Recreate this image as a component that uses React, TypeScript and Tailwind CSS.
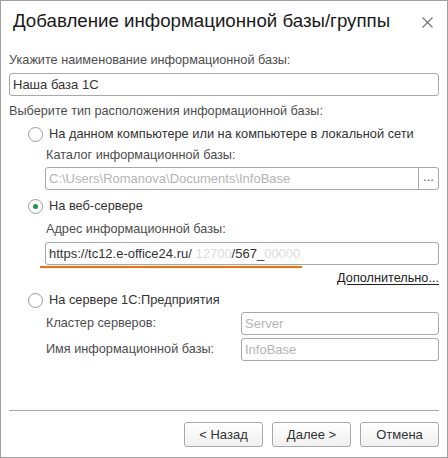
const font = "font-['Liberation_Sans',Arial,sans-serif]";

function Radio({ checked = false, label }: { checked?: boolean; label: string }) {
  return (
    <div className="flex h-[18px] items-center pl-[19px]">
      <span className="grid h-[15px] w-[15px] place-items-center rounded-full border border-[#9a9a9a] bg-white">
        {checked && <span className="h-[5px] w-[5px] rounded-full bg-[#1c9a4a]" />}
      </span>
      <span className="ml-[6px] text-[12.8px] text-[#333]">{label}</span>
    </div>
  );
}

function Field({ value, muted = false, className = '' }: { value: React.ReactNode; muted?: boolean; className?: string }) {
  return (
    <div
      className={`flex h-[23px] items-center rounded-[3px] border border-[#a8a8a8] bg-white px-[3px] text-[13px] ${
        muted ? 'text-[#b4b4b4]' : 'text-[#333]'
      } ${className}`}
    >
      {value}
    </div>
  );
}

function Button({ children }: { children: React.ReactNode }) {
  return (
    <button
      type="button"
      className="h-[25px] w-[79px] rounded-[3px] border border-[#a8a8a8] bg-gradient-to-b from-white to-[#f0f0f0] text-[13px] text-[#333]"
    >
      {children}
    </button>
  );
}

const label = 'text-[12.7px] leading-[15px] text-[#4d4d4d]';

export default function App() {
  return (
    <div className={`${font} flex h-[458px] w-[448px] flex-col border border-[#a0a0a0] bg-white`}>
      {/* header */}
      <div className="flex h-[41px] items-center justify-between pl-[12px] pr-[14px]">
        <h1 className="whitespace-nowrap text-[18.7px] leading-none text-[#1a1a1a]">Добавление информационной базы/группы</h1>
        <svg width="11" height="11" viewBox="0 0 11 11" className="mt-[1px] shrink-0">
          <path d="M0.5 0.5L10.5 10.5M10.5 0.5L0.5 10.5" stroke="#707070" strokeWidth="1.1" />
        </svg>
      </div>

      <div className="flex flex-col px-[8px]">
        <div className={`mt-[11px] ${label}`}>Укажите наименование информационной базы:</div>
        <Field value="Наша база 1С" className="mt-[5px]" />

        <div className={`mt-[8px] ${label}`}>Выберите тип расположения информационной базы:</div>

        <div className="mt-[6px]">
          <Radio label="На данном компьютере или на компьютере в локальной сети" />
        </div>
        <div className={`ml-[37px] mt-[5px] ${label}`}>Каталог информационной базы:</div>
        <div className="ml-[36px] mt-[4px] flex h-[23px] rounded-[3px] border border-[#a8a8a8] bg-white text-[13px]">
          <div className="flex flex-1 items-center px-[3px] text-[#b4b4b4]">C:\Users\Romanova\Documents\InfoBase</div>
          <div className="flex w-[20px] items-center justify-center border-l border-[#a8a8a8] pb-[4px] text-[#555]">...</div>
        </div>

        <div className="mt-[7px]">
          <Radio checked label="На веб-сервере" />
        </div>
        <div className={`ml-[37px] mt-[7px] ${label}`}>Адрес информационной базы:</div>
        <div className="ml-[36px] mt-[5px]">
          <Field
            value={
              <span>
                https://tc12.e-office24.ru/<span className="text-[#dcdcdc]"> 12700</span>/567_<span className="text-[#dcdcdc]">00000</span>
              </span>
            }
            className="h-[22px]"
          />
        </div>
        <div className="ml-[31px] mt-[1px] h-[2px] w-[262px] bg-[#ff6d00]" />
        <div className="mt-[3px] flex justify-end">
          <span className="text-[12.7px] leading-[15px] text-[#222] underline underline-offset-2">Дополнительно...</span>
        </div>

        <div className="mt-[5px]">
          <Radio label="На сервере 1С:Предприятия" />
        </div>
        <div className="mt-[3px] flex items-center">
          <div className={`ml-[37px] w-[195px] ${label}`}>Кластер серверов:</div>
          <Field value="Server" muted className="h-[22px] flex-1" />
        </div>
        <div className="mt-[3px] flex items-center">
          <div className={`ml-[37px] w-[195px] ${label}`}>Имя информационной базы:</div>
          <Field value="InfoBase" muted className="h-[22px] flex-1" />
        </div>
      </div>

      <div className="flex-1" />
      <div className="mx-[8px] border-t border-[#a8a8a8]" />
      <div className="flex justify-end gap-[9px] px-[8px] pb-[10px] pt-[11px]">
        <Button>&lt; Назад</Button>
        <Button>Далее &gt;</Button>
        <Button>Отмена</Button>
      </div>
    </div>
  );
}
